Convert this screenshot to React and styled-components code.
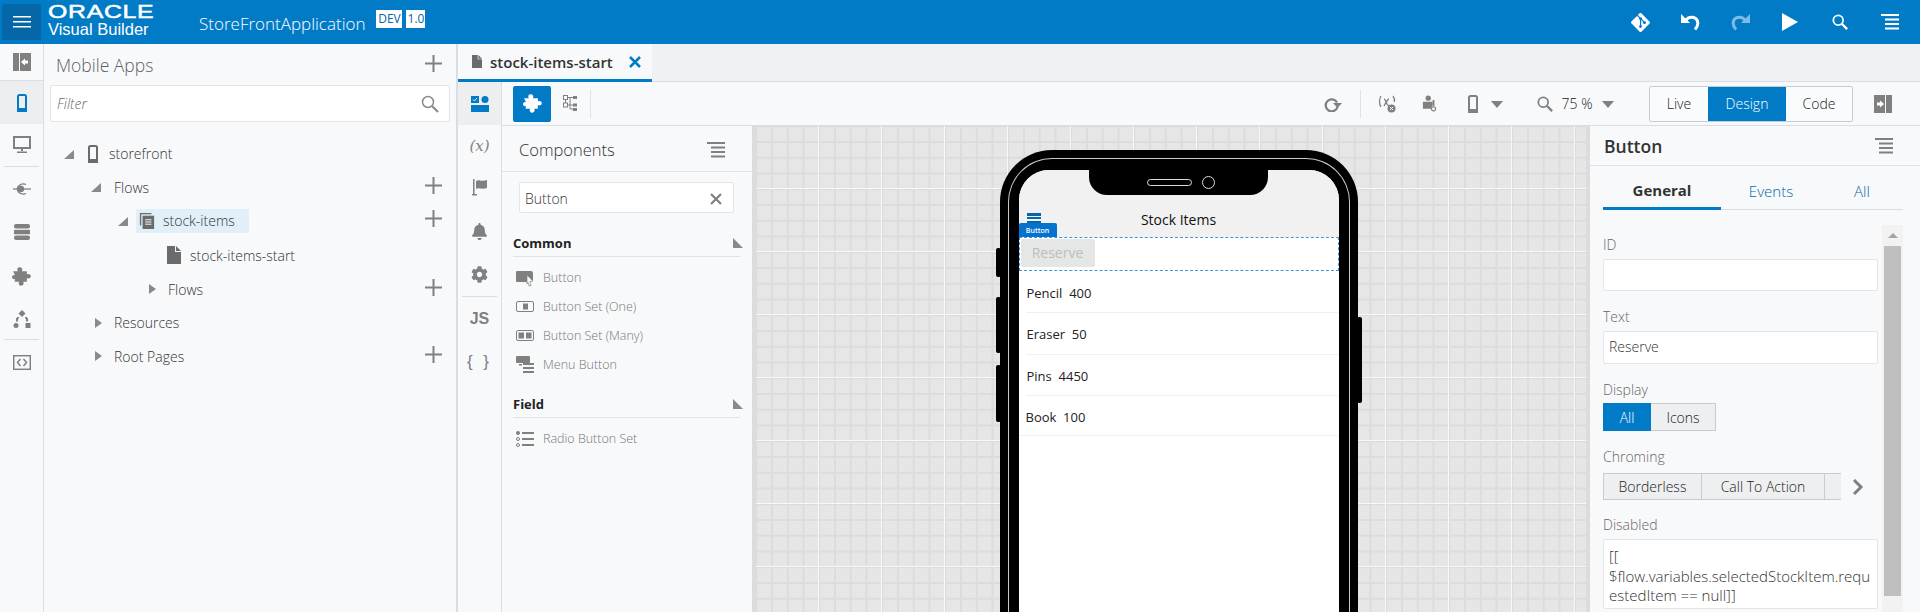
import styled, { createGlobalStyle } from "styled-components";
import { FaBell, FaCog } from "react-icons/fa";
import { SiGit } from "react-icons/si";

const GlobalStyle = createGlobalStyle`
  html, body { margin: 0; padding: 0; background: #f8f9fb; }
  * { box-sizing: border-box; }
  body { font-family: "Open Sans", "Noto Sans", sans-serif; color: #333; }
`;

const Page = styled.div`
  width: 1920px;
  height: 612px;
  display: flex;
  flex-direction: column;
  overflow: hidden;
`;

const Header = styled.header`
  height: 44px;
  flex: none;
  background: #027bc7;
  display: flex;
  align-items: center;
  color: #fff;
  padding-left: 2px;
`;

const MenuBtn = styled.div`
  width: 39px;
  height: 36px;
  border-radius: 2px;
  background: #0566a8;
  display: flex;
  align-items: center;
  justify-content: center;
`;

const Logo = styled.div`
  width: 151px;
  margin-left: 7px;
  display: flex;
  flex-direction: column;
`;

const LogoTop = styled.span`
  font-family: "Liberation Sans", sans-serif;
  font-size: 18px;
  line-height: 15px;
  font-weight: 400;
  letter-spacing: 0.5px;
  -webkit-text-stroke: 0.5px #fff;
  transform: scaleX(1.38);
  transform-origin: left center;
`;

const LogoBottom = styled.span`
  font-family: "Liberation Sans", sans-serif;
  font-size: 16.5px;
  line-height: 19px;
`;

const AppName = styled.div`
  font-size: 17px;
  font-weight: 300;
  margin-right: 11px;
  margin-top: 2px;
`;

const Badge = styled.span`
  background: #fff;
  color: #0566a8;
  font-size: 12px;
  line-height: 18px;
  height: 18px;
  margin-right: 4px;
  margin-top: -7px;
  text-align: center;
  width: ${(p) => p.$w}px;
`;

const HeaderTools = styled.div`
  margin-left: auto;
  display: flex;
  align-items: center;
  padding-right: 5px;
`;

const HeaderTool = styled.div`
  width: 50px;
  height: 44px;
  display: flex;
  align-items: center;
  justify-content: center;
  color: ${(p) => (p.$dim ? "#7cbce6" : "#fff")};
`;

const Body = styled.div`
  flex: 1;
  min-height: 0;
  display: flex;
`;

const Rail = styled.nav`
  width: 44px;
  flex: none;
  border-right: 1px solid #d6dfe6;
  background: #f8f9fb;
  display: flex;
  flex-direction: column;
`;

const RailItem = styled.div`
  height: ${(p) => p.$h || 43}px;
  flex: none;
  display: flex;
  align-items: center;
  justify-content: center;
  color: ${(p) => (p.$active ? "#027bc7" : "#808080")};
  background: ${(p) => (p.$active ? "#eceef0" : "transparent")};
  border-top: ${(p) => (p.$line ? "1px solid #d6dfe6" : "none")};
`;

const RailRule = styled.div`
  height: 1px;
  flex: none;
  margin: 0 4px;
  background: #d6dfe6;
`;

const RailGlyph = styled.span`
  font-family: ${(p) => (p.$serif ? '"DejaVu Serif", serif' : '"Liberation Sans", sans-serif')};
  font-size: ${(p) => p.$size || 16}px;
  font-weight: ${(p) => p.$weight || 400};
  font-style: ${(p) => (p.$italic ? "italic" : "normal")};
  letter-spacing: ${(p) => p.$spacing || 0}px;
`;

const Explorer = styled.section`
  width: 414px;
  flex: none;
  background: #f8f9fb;
  border-right: 2px solid #d6dfe6;
  display: flex;
  flex-direction: column;
`;

const ExplorerHead = styled.div`
  height: 41px;
  padding: 1px 14px 0 12px;
  display: flex;
  align-items: center;
  justify-content: space-between;
`;

const ExplorerTitle = styled.h2`
  margin: 0;
  font-size: 17.5px;
  font-weight: 300;
  color: #5f5f5f;
`;

const PlusMark = styled.div`
  color: #808080;
  display: flex;
  margin-left: auto;
  margin-bottom: 4px;
`;

const FilterBox = styled.div`
  height: 37px;
  margin: 0 6px;
  background: #fff;
  border: 1px solid #e3e6e9;
  border-radius: 2px;
  display: flex;
  align-items: center;
  justify-content: space-between;
  padding: 0 10px 0 6px;
  font-size: 14px;
  font-style: italic;
  font-weight: 300;
  color: #666;
`;

const FilterIcon = styled.span`
  color: #8a8a8a;
`;

const Tree = styled.div`
  margin-top: 15px;
`;

const TreeRow = styled.div`
  height: ${(p) => p.$h || 33.5}px;
  padding: 0 14px 0 ${(p) => p.$indent}px;
  display: flex;
  align-items: center;
  font-size: 14px;
  font-weight: 300;
  color: #333;
`;

const CaretBox = styled.span`
  width: 10px;
  flex: none;
  display: flex;
  color: #8a8a8a;
  margin-right: ${(p) => p.$mr}px;
`;

const TreeIcon = styled.span`
  display: flex;
  color: #6b6b6b;
  margin-right: ${(p) => p.$mr}px;
`;

const Selected = styled.div`
  display: flex;
  align-items: center;
  height: 24px;
  padding: 0 6px 0 3px;
  width: 113px;
  background: #e1eff8;
`;

const Workspace = styled.div`
  flex: 1;
  min-width: 0;
  display: flex;
  flex-direction: column;
`;

const TabBar = styled.div`
  height: 38px;
  flex: none;
  background: #f0f1f3;
  border-bottom: 1px solid #d6dfe6;
`;

const Tab = styled.div`
  width: 194px;
  height: 38px;
  background: #f8f9fb;
  border-bottom: 3px solid #027bc7;
  display: flex;
  align-items: center;
  padding-left: 14px;
  font-size: 15px;
  font-weight: 600;
  color: #333;
  gap: 8px;
`;

const TabIcon = styled.span`
  color: #6b6b6b;
`;

const TabClose = styled.span`
  color: #027bc7;
  margin-left: 8px;
`;

const WorkBody = styled.div`
  flex: 1;
  min-height: 0;
  display: flex;
`;

const SubRail = styled(Rail)``;

const Main = styled.div`
  flex: 1;
  min-width: 0;
  display: flex;
  flex-direction: column;
`;

const Toolbar = styled.div`
  height: 44px;
  flex: none;
  background: #f8f9fb;
  border-bottom: 1px solid #d6dfe6;
  display: flex;
  align-items: center;
  padding-left: 11px;
  color: #808080;
`;

const ToolButton = styled.div`
  width: ${(p) => p.$w || 38}px;
  height: 36px;
  margin-left: ${(p) => p.$ml || 0}px;
  border-radius: 2px;
  display: flex;
  align-items: center;
  justify-content: center;
  background: ${(p) => (p.$active ? "#027bc7" : "transparent")};
  color: ${(p) => (p.$active ? "#fff" : "#808080")};
  flex: none;
`;

const ToolRule = styled.div`
  width: 1px;
  height: 28px;
  background: #dfe3e7;
  flex: none;
  margin-left: ${(p) => p.$ml || 0}px;
`;

const ZoomText = styled.span`
  font-size: 14px;
  font-weight: 300;
  color: #222;
  width: 32px;
  margin-left: 8px;
  text-align: center;
  flex: none;
`;

const ViewSwitch = styled.div`
  display: flex;
  height: 36px;
  margin-left: 35px;
  border: 1px solid #c8ccd0;
  border-radius: 2px;
  background: #fafbfc;
`;

const ViewOption = styled.div`
  width: ${(p) => p.$w}px;
  display: flex;
  align-items: center;
  justify-content: center;
  font-size: 14px;
  font-weight: 300;
  color: ${(p) => (p.$active ? "#fff" : "#222")};
  background: ${(p) => (p.$active ? "#027bc7" : "transparent")};
`;

const Panels = styled.div`
  flex: 1;
  min-height: 0;
  display: flex;
`;

const Components = styled.aside`
  width: 254px;
  flex: none;
  background: #f8f9fb;
  border-right: 4px solid #dcdcdc;
`;

const PanelHead = styled.div`
  height: 46px;
  padding: 2px 27px 0 17px;
  display: flex;
  align-items: center;
  justify-content: space-between;
  border-bottom: 1px solid #dfe3e7;
`;

const PanelTitle = styled.h3`
  margin: 0;
  font-size: 16.5px;
  font-weight: 300;
  color: #333;
`;

const PanelMenu = styled.span`
  color: #808080;
`;

const SearchBox = styled.div`
  height: 31px;
  margin: 10px 18px 0 17px;
  background: #fff;
  border: 1px solid #e3e6e9;
  border-radius: 2px;
  padding: 2px 11px 0 5px;
  display: flex;
  align-items: center;
  justify-content: space-between;
  font-size: 14px;
  font-weight: 300;
  color: #333;
`;

const GroupHead = styled.div`
  height: 24px;
  margin: ${(p) => p.$mt}px 12px 0 11px;
  padding-bottom: 3px;
  display: flex;
  align-items: center;
  justify-content: space-between;
  font-size: 13px;
  font-weight: 700;
  color: #222;
  border-bottom: 1px solid #dfe3e7;
`;

const GroupCorner = styled.span`
  display: flex;
  color: #8a8a8a;
  margin-right: -3px;
`;

const PaletteItem = styled.div`
  height: 29px;
  padding-left: 14px;
  display: flex;
  align-items: center;
  gap: 9px;
  font-size: 12.5px;
  font-weight: 300;
  color: #777;
`;

const PaletteIcon = styled.span`
  width: 18px;
  display: flex;
  color: #808080;
`;

const PaletteList = styled.div`
  padding-top: 6px;
`;

const Canvas = styled.div`
  flex: 1;
  min-width: 0;
  overflow: hidden;
  display: flex;
  justify-content: center;
  align-items: flex-start;
  padding: 24px 0 0 11px;
  background-color: #e6e6e6;
  background-image:
    linear-gradient(to right, #f8f8f8 1px, transparent 1px),
    linear-gradient(to bottom, #f8f8f8 1px, transparent 1px),
    linear-gradient(to right, #dcdcdc 2px, transparent 2px),
    linear-gradient(to bottom, #dcdcdc 2px, transparent 2px);
  background-size: 63px 63px, 63px 63px, 15.75px 15.75px, 15.75px 15.75px;
  background-position: 62px 0, 0 62px, 15px 0, 0 15px;
`;

const Phone = styled.div`
  position: relative;
  width: 358px;
  height: 520px;
  flex: none;
  background: #000;
  border-radius: 52px 52px 0 0;
  padding: 8px 8px 0;
`;

const SideKey = styled.span`
  position: absolute;
  ${(p) => (p.$right ? "right: -4px;" : "left: -4px;")}
  top: ${(p) => p.$top}px;
  height: ${(p) => p.$h}px;
  width: 5px;
  background: #000;
  border-radius: 2px;
`;

const PhoneRing = styled.div`
  height: 100%;
  border: 1px solid #c9c9c9;
  border-bottom: none;
  border-radius: 44px 44px 0 0;
  background: #000;
  padding: 11px 10px 0;
`;

const Screen = styled.div`
  position: relative;
  height: 100%;
  background: #fff;
  border-radius: 30px 30px 0 0;
  overflow: hidden;
  font-family: "Open Sans", sans-serif;
`;

const Notch = styled.div`
  position: absolute;
  z-index: 2;
  top: 0;
  left: 70px;
  width: 179px;
  height: 25px;
  background: #000;
  border-radius: 0 0 18px 18px;
  display: flex;
  align-items: center;
  justify-content: center;
  gap: 10px;
  padding-left: 6px;
`;

const Speaker = styled.span`
  width: 45px;
  height: 7px;
  border: 1px solid #ddd;
  border-radius: 4px;
`;

const Camera = styled.span`
  width: 13px;
  height: 13px;
  border: 1px solid #ddd;
  border-radius: 50%;
`;

const ScreenBar = styled.div`
  position: relative;
  height: 67px;
  background: #f1f1f1;
  display: flex;
  align-items: flex-end;
  justify-content: center;
  padding-bottom: 8px;
  font-size: 14px;
  color: #111;
`;

const ScreenMenu = styled.span`
  position: absolute;
  left: 8px;
  bottom: 13px;
  width: 14px;
  height: 11px;
  border-top: 3px solid #0566a8;
  border-bottom: 3px solid #0566a8;
  &::after {
    content: "";
    display: block;
    height: 2px;
    margin-top: 1px;
    background: #0566a8;
  }
`;

const ComponentTag = styled.span`
  position: absolute;
  left: 0;
  bottom: 0;
  width: 38px;
  height: 14px;
  background: #0572ce;
  color: #fff;
  font-size: 7px;
  font-weight: 600;
  line-height: 15px;
  text-align: center;
  border-radius: 2px 2px 0 0;
`;

const SelectedRow = styled.div`
  height: 34px;
  border: 1px dashed #3c96df;
  padding: 1px 0 0 1px;
`;

const ReserveButton = styled.div`
  width: 74px;
  height: 28px;
  border-radius: 2px;
  background: #e5e6e6;
  color: #bdbdbd;
  font-size: 14px;
  line-height: 27px;
  text-align: center;
`;

const ListRow = styled.div`
  height: ${(p) => p.$h || 41.5}px;
  margin-left: ${(p) => (p.$flush ? 0 : 7)}px;
  padding-left: ${(p) => (p.$flush ? 7 : 1)}px;
  padding-top: 2px;
  display: flex;
  align-items: center;
  border-bottom: 1px solid #f0f0f0;
  font-size: 13px;
  color: #222;
  white-space: pre;
`;

const Props = styled.aside`
  width: 334px;
  flex: none;
  background: #f8f9fb;
  display: flex;
  flex-direction: column;
  border-left: 4px solid #dcdcdc;
  margin-left: -4px;
  z-index: 1;
`;

const PropsHead = styled.div`
  height: 40px;
  flex: none;
  padding: 0 27px 0 14px;
  display: flex;
  align-items: center;
  justify-content: space-between;
  border-bottom: 1px solid #dfe3e7;
  color: #808080;
`;

const PropsTitle = styled.h3`
  margin: 0;
  font-size: 17.5px;
  font-weight: 600;
  color: #333;
`;

const PropsTabs = styled.div`
  height: 44px;
  flex: none;
  margin: 0 17px 0 13px;
  display: flex;
  border-bottom: 1px solid #d6dfe6;
`;

const PropsTab = styled.div`
  width: ${(p) => p.$w}px;
  height: 44px;
  padding-top: ${(p) => (p.$active ? 6 : 5)}px;
  display: flex;
  align-items: center;
  justify-content: center;
  font-size: 15px;
  font-weight: ${(p) => (p.$active ? 700 : 300)};
  color: ${(p) => (p.$active ? "#333" : "#0566a8")};
  border-bottom: ${(p) => (p.$active ? "3px solid #027bc7" : "none")};
`;

const PropsScroll = styled.div`
  flex: 1;
  min-height: 0;
  margin: 15px 17px 0 13px;
  display: flex;
  justify-content: space-between;
`;

const Form = styled.div`
  width: 275px;
  padding-top: 10px;
`;

const Field = styled.div`
  margin-bottom: ${(p) => p.$mb || 16}px;
`;

const FieldLabel = styled.label`
  display: block;
  height: 20px;
  line-height: 20px;
  font-size: 14px;
  font-weight: 300;
  color: #666;
  margin-bottom: ${(p) => p.$mb || 4}px;
`;

const TextInput = styled.div`
  height: ${(p) => p.$h || 32}px;
  background: #fff;
  border: 1px solid #e3e6e9;
  border-radius: 2px;
  padding: 0 5px;
  font-size: 14px;
  font-weight: 300;
  line-height: 30px;
  color: #333;
`;

const TextArea = styled(TextInput)`
  line-height: 19.5px;
  padding-top: 7px;
  font-size: 15px;
  white-space: nowrap;
  overflow: hidden;
`;

const Segments = styled.div`
  display: flex;
  height: ${(p) => p.$h || 28}px;
  align-items: stretch;
`;

const Segment = styled.div`
  width: ${(p) => p.$w}px;
  flex: none;
  display: flex;
  align-items: center;
  justify-content: center;
  font-size: 14px;
  font-weight: 300;
  white-space: nowrap;
  color: ${(p) => (p.$active ? "#fff" : "#222")};
  background: ${(p) => (p.$active ? "#027bc7" : "#eeeff0")};
  border: 1px solid ${(p) => (p.$active ? "#027bc7" : "#c8ccd0")};
  border-left-width: ${(p) => (p.$first ? 1 : 0)}px;
`;

const SegmentClip = styled.div`
  width: 238px;
  display: flex;
  overflow: hidden;
  flex: none;
`;

const ChevronSlot = styled.span`
  display: flex;
  align-items: center;
  margin-left: 11px;
  color: #808080;
`;

const Scrollbar = styled.div`
  width: 21px;
  flex: none;
  background: #f2f2f2;
  padding: 0 2px;
  display: flex;
  flex-direction: column;
`;

const ScrollUp = styled.div`
  height: 21px;
  display: flex;
  align-items: center;
  justify-content: center;
  color: #a5a5a5;
`;

const ScrollThumb = styled.div`
  height: 350px;
  background: #bfbfbf;
`;

const Ico = ({ size = 18, vb = "0 0 18 18", children }) => (
  <svg width={size} height={size} viewBox={vb} fill="currentColor" style={{ display: "block" }}>
    {children}
  </svg>
);

const Plus = () => (
  <PlusMark>
    <Ico size={17} vb="0 0 17 17">
      <rect x="0" y="7.5" width="17" height="2" />
      <rect x="7.5" y="0" width="2" height="17" />
    </Ico>
  </PlusMark>
);

const Caret = ({ open, mr }) => (
  <CaretBox $mr={mr}>
    <Ico size={10} vb="0 0 10 10">
      {open ? <polygon points="10,1 10,10 0,10" /> : <polygon points="1,0 8,5 1,10" />}
    </Ico>
  </CaretBox>
);

const Corner = () => (
  <Ico size={10} vb="0 0 10 10"><polygon points="0,0 10,10 0,10" /></Ico>
);

const DownCaret = () => (
  <Ico size={12} vb="0 0 12 12"><polygon points="0,3 12,3 6,10" /></Ico>
);

const Lines = ({ size = 18 }) => (
  <Ico size={size}>
    <rect x="0" y="1" width="18" height="2" />
    <rect x="4" y="5.5" width="14" height="2" />
    <rect x="4" y="10" width="14" height="2" />
    <rect x="4" y="14.5" width="14" height="2" />
  </Ico>
);

const Search = ({ size = 18, sw = 2 }) => (
  <svg width={size} height={size} viewBox="0 0 18 18" fill="none" stroke="currentColor" strokeWidth={sw} style={{ display: "block" }}>
    <circle cx="7" cy="7" r="5.5" />
    <line x1="11" y1="11" x2="17" y2="17" strokeWidth={sw + 0.6} />
  </svg>
);

const Cross = ({ sw = 2.2 }) => (
  <svg width="12" height="12" viewBox="0 0 12 12" stroke="currentColor" strokeWidth={sw} style={{ display: "block" }}>
    <path d="M1 1l10 10M11 1L1 11" />
  </svg>
);

const Puzzle = ({ size = 19 }) => (
  <Ico size={size}>
    <path d="M1 4h4.500c-1-1.500-.6-3.400 1.500-3.800 2.400-.3 3.500 2 2.300 3.800H14l.2 3c1.500-1 3.300-.3 3.600 1.400.3 2-1.800 3-3.700 2L14 14h-3.400c.9 1.500.4 3.500-1.600 3.800-2.200.2-3.300-2-2.300-3.800H2.500l.3-2.800C1.500 12 .1 11.400 0 9.800-.1 8 1.500 7 2.900 7.700L1 4z" />
  </Ico>
);

const PhoneGlyph = ({ h = 18, w = 10 }) => (
  <svg width={w} height={h} viewBox="0 0 10 18" fill="none" stroke="currentColor" strokeWidth="2" style={{ display: "block" }}>
    <rect x="1" y="1" width="8" height="16" rx="1.500" />
    <rect x="1" y="15" width="8" height="2" fill="currentColor" />
  </svg>
);

const DocGlyph = ({ w = 14, h = 18 }) => (
  <svg width={w} height={h} viewBox="0 0 14 18" fill="currentColor" style={{ display: "block" }}>
    <path d="M0 0h8v6h6v12H0z" />
    <path d="M9 0l5 5H9z" />
  </svg>
);

const Undo = ({ flip }) => (
  <svg width="19" height="18" viewBox="0 0 19 18" fill="none" style={{ display: "block", transform: flip ? "scaleX(-1)" : "none" }}>
    <path d="M5 7c3-4 9-3.500 11 0 1.700 3.300.7 6.500-2 9.500" stroke="currentColor" strokeWidth="3" />
    <polygon points="0,1 9,10 0,10" fill="currentColor" />
  </svg>
);

const App = () => {
  return (
    <>
      <GlobalStyle />
      <Page>
        <Header>
          <MenuBtn>
            <svg width="18" height="12" viewBox="0 0 18 12" fill="#fff" style={{ display: "block" }}>
              <rect y="0" width="18" height="1.500" />
              <rect y="5" width="18" height="1.500" />
              <rect y="10" width="18" height="1.500" />
            </svg>
          </MenuBtn>
          <Logo>
            <LogoTop>ORACLE</LogoTop>
            <LogoBottom>Visual Builder</LogoBottom>
          </Logo>
          <AppName>StoreFrontApplication</AppName>
          <Badge $w={26}>DEV</Badge>
          <Badge $w={19}>1.0</Badge>
          <HeaderTools>
            <HeaderTool><SiGit size={19} /></HeaderTool>
            <HeaderTool><Undo /></HeaderTool>
            <HeaderTool $dim><Undo flip /></HeaderTool>
            <HeaderTool>
              <Ico size={18}><polygon points="1,0 17,9 1,18" /></Ico>
            </HeaderTool>
            <HeaderTool><Search size={16} /></HeaderTool>
            <HeaderTool><Lines /></HeaderTool>
          </HeaderTools>
        </Header>
        <Body>
          <Rail>
            <RailItem $h={36}>
              <Ico size={18}>
                <path d="M0 0h6v18H0zM7 0h11v18H7z" />
                <polygon points="8,9 12,5.500 12,7.500 15,7.500 15,10.500 12,10.500 12,12.500" fill="#fff" />
              </Ico>
            </RailItem>
            <RailItem $h={44} $active $line>
              <PhoneGlyph />
            </RailItem>
            <RailItem $h={42}>
              <svg width="18" height="18" viewBox="0 0 18 18" fill="none" stroke="currentColor" strokeWidth="2" style={{ display: "block" }}>
                <rect x="1" y="1" width="16" height="11" />
                <rect x="8" y="13" width="2" height="2" fill="currentColor" stroke="none" />
                <rect x="4" y="15.500" width="10" height="1.500" fill="currentColor" stroke="none" />
              </svg>
            </RailItem>
            <RailRule />
            <RailItem $h={43}>
              <svg width="18" height="14" viewBox="0 0 18 14" fill="none" stroke="currentColor" strokeWidth="1.300" style={{ display: "block" }}>
                <path d="M13 2.500a6 5 0 1 0 0 9" />
                <circle cx="8" cy="7" r="2.500" fill="currentColor" />
                <line x1="0" y1="7" x2="18" y2="7" />
              </svg>
            </RailItem>
            <RailItem $h={44}>
              <Ico size={18}>
                <rect x="1" y="1" width="16" height="4.500" rx="2" />
                <rect x="1" y="6.800" width="16" height="4.500" />
                <rect x="1" y="12.600" width="16" height="4.500" rx="2" />
              </Ico>
            </RailItem>
            <RailItem $h={44}><Puzzle /></RailItem>
            <RailItem $h={41}>
              <Ico size={18}>
                <polygon points="9,0 12.500,3.500 9,7 5.500,3.500" />
                <rect x="0.500" y="13" width="5" height="5" rx="2.500" />
                <rect x="12.500" y="13" width="5" height="5" />
                <rect x="3" y="8" width="2" height="3.500" />
                <rect x="13" y="8" width="2" height="3.500" />
                <rect x="4" y="7" width="2" height="1.500" />
                <rect x="12" y="7" width="2" height="1.500" />
              </Ico>
            </RailItem>
            <RailRule />
            <RailItem $h={44}>
              <svg width="18" height="15" viewBox="0 0 18 15" fill="none" stroke="currentColor" strokeWidth="1.500" style={{ display: "block" }}>
                <rect x="0.700" y="0.700" width="16.600" height="13.600" />
                <path d="M7.500 4l-3 3.500 3 3.500M10.500 4l3 3.500-3 3.500" />
              </svg>
            </RailItem>
          </Rail>
          <Explorer>
            <ExplorerHead>
              <ExplorerTitle>Mobile Apps</ExplorerTitle>
              <Plus />
            </ExplorerHead>
            <FilterBox>
              Filter
              <FilterIcon><Search size={18} sw={1.500} /></FilterIcon>
            </FilterBox>
            <Tree>
              <TreeRow $indent={20}>
                <Caret open mr={14} />
                <TreeIcon $mr={11}><PhoneGlyph /></TreeIcon>
                storefront
              </TreeRow>
              <TreeRow $indent={47}>
                <Caret open mr={13} />
                Flows
                <Plus />
              </TreeRow>
              <TreeRow $indent={74}>
                <Caret open mr={8} />
                <Selected>
                  <TreeIcon $mr={8}>
                    <Ico size={16} vb="0 0 16 18">
                      <path d="M0 0h13v1.500H1.500V14H0z" />
                      <path d="M3 3h13v15H3z" />
                      <rect x="6" y="7" width="7" height="1.200" fill="#e1eff8" />
                      <rect x="6" y="9.500" width="7" height="1.200" fill="#e1eff8" />
                      <rect x="6" y="12" width="7" height="1.200" fill="#e1eff8" />
                    </Ico>
                  </TreeIcon>
                  stock-items
                </Selected>
                <Plus />
              </TreeRow>
              <TreeRow $indent={123} $h={35}>
                <TreeIcon $mr={9}><DocGlyph /></TreeIcon>
                stock-items-start
              </TreeRow>
              <TreeRow $indent={104}>
                <Caret mr={10} />
                Flows
                <Plus />
              </TreeRow>
              <TreeRow $indent={50}>
                <Caret mr={10} />
                Resources
              </TreeRow>
              <TreeRow $indent={50}>
                <Caret mr={10} />
                Root Pages
                <Plus />
              </TreeRow>
            </Tree>
          </Explorer>
          <Workspace>
            <TabBar>
              <Tab>
                <TabIcon><DocGlyph w={10} h={13} /></TabIcon>
                stock-items-start
                <TabClose><Cross sw={2.500} /></TabClose>
              </Tab>
            </TabBar>
            <WorkBody>
              <SubRail>
                <RailItem $h={43} $active>
                  <Ico size={18}>
                    <rect x="0" y="1" width="8" height="7" />
                    <circle cx="14" cy="4.500" r="3.500" />
                    <rect x="0" y="10" width="18" height="7" />
                    <path d="M2 4.500l1.500 1.500L6 3" stroke="#eceef0" strokeWidth="1" fill="none" />
                  </Ico>
                </RailItem>
                <RailItem $h={42}><RailGlyph $serif $italic $size={15}>(x)</RailGlyph></RailItem>
                <RailItem $h={42}>
                  <Ico size={18}>
                    <rect x="2" y="0" width="1.500" height="15" />
                    <rect x="1" y="15" width="5" height="1.500" />
                    <path d="M5 2c3-2 5 1 11-1v8c-5 2-8-1-11 1z" />
                  </Ico>
                </RailItem>
                <RailItem $h={44}><FaBell size={17} /></RailItem>
                <RailItem $h={43}><FaCog size={17} /></RailItem>
                <RailRule />
                <RailItem $h={44}><RailGlyph $size={16} $weight={700}>JS</RailGlyph></RailItem>
                <RailItem $h={42}><RailGlyph $size={17} $spacing={3}>{"{ }"}</RailGlyph></RailItem>
              </SubRail>
              <Main>
                <Toolbar>
                  <ToolButton $active><Puzzle /></ToolButton>
                  <ToolButton>
                    <svg width="14" height="18" viewBox="0 0 14 18" fill="none" stroke="currentColor" style={{ display: "block" }}>
                      <rect x="0.500" y="0.500" width="4" height="4" />
                      <rect x="0.500" y="8" width="4" height="4" />
                      <path d="M4.500 2.500H10M2.500 4.500V8M4.500 10H10M7 3v11h3" />
                      <rect x="10" y="1" width="4" height="3" fill="currentColor" stroke="none" />
                      <rect x="10" y="8.500" width="4" height="3" fill="currentColor" stroke="none" />
                      <rect x="10" y="13" width="4" height="3" fill="currentColor" stroke="none" />
                    </svg>
                  </ToolButton>
                  <ToolRule $ml={1} />
                  <ToolButton $w={18} $ml={733}>
                    <svg width="18" height="16" viewBox="0 0 18 16" fill="none" style={{ display: "block" }}>
                      <path d="M13 6.500A6 6 0 1 0 13.500 11" stroke="currentColor" strokeWidth="2.300" />
                      <polygon points="9,7 18,7 13.500,12" fill="currentColor" />
                    </svg>
                  </ToolButton>
                  <ToolRule $ml={18} />
                  <ToolButton $w={18} $ml={17}>
                    <svg width="18" height="18" viewBox="0 0 18 18" fill="none" stroke="currentColor" strokeWidth="1.300" style={{ display: "block" }}>
                      <path d="M3 1C1 4 1 9 3 12M15 1c1.500 2 1.700 4 1.400 6M6 4c1.500 0 2 3 3 5s1.500 2 2.500 2M11 4c-1.500 0-3 3-5 7" />
                      <circle cx="13.500" cy="13.500" r="4" fill="currentColor" stroke="none" />
                      <path d="M12 12l3 3M15 12l-3 3" stroke="#f8f9fb" strokeWidth="1" />
                    </svg>
                  </ToolButton>
                  <ToolButton $w={16} $ml={26}>
                    <Ico size={17}>
                      <circle cx="7" cy="3" r="3" />
                      <path d="M1 7h11v4l-1 1v3H1z" />
                      <rect x="12" y="5" width="2" height="7" />
                      <circle cx="13" cy="15" r="2.300" fill="none" stroke="currentColor" strokeWidth="1.200" />
                    </Ico>
                  </ToolButton>
                  <ToolButton $w={12} $ml={29}><PhoneGlyph /></ToolButton>
                  <ToolButton $w={12} $ml={12}><DownCaret /></ToolButton>
                  <ToolButton $w={16} $ml={34}><Search size={16} /></ToolButton>
                  <ZoomText>75 %</ZoomText>
                  <ToolButton $w={12} $ml={9}><DownCaret /></ToolButton>
                  <ViewSwitch>
                    <ViewOption $w={58}>Live</ViewOption>
                    <ViewOption $w={78} $active>Design</ViewOption>
                    <ViewOption $w={66}>Code</ViewOption>
                  </ViewSwitch>
                  <ToolButton $w={18} $ml={21}>
                    <Ico size={18}>
                      <path d="M0 0h11v18H0zM12 0h6v18h-6z" />
                      <polygon points="10,9 6,5.500 6,7.500 3,7.500 3,10.500 6,10.500 6,12.500" fill="#fff" />
                    </Ico>
                  </ToolButton>
                </Toolbar>
                <Panels>
                  <Components>
                    <PanelHead>
                      <PanelTitle>Components</PanelTitle>
                      <PanelMenu><Lines /></PanelMenu>
                    </PanelHead>
                    <SearchBox>
                      Button
                      <PanelMenu><Cross /></PanelMenu>
                    </SearchBox>
                    <GroupHead $mt={20}>
                      Common
                      <GroupCorner><Corner /></GroupCorner>
                    </GroupHead>
                    <PaletteList>
                      <PaletteItem>
                        <PaletteIcon>
                          <Ico size={18} vb="0 0 18 16">
                            <path d="M1 1h14a2 2 0 0 1 2 2v7h-6v2H1a1 1 0 0 1-1-1V2a1 1 0 0 1 1-1z" />
                            <path d="M11 5l6 6-3 .5 1 4-2 .5-1-3.500-1 1.500z" fill="#f8f9fb" stroke="currentColor" strokeWidth=".7" />
                          </Ico>
                        </PaletteIcon>
                        Button
                      </PaletteItem>
                      <PaletteItem>
                        <PaletteIcon>
                          <svg width="18" height="12" viewBox="0 0 18 12" fill="none" stroke="currentColor" style={{ display: "block" }}>
                            <rect x="0.500" y="0.500" width="17" height="10" rx="1.500" />
                            <rect x="7" y="2.500" width="5" height="6" fill="currentColor" stroke="none" />
                          </svg>
                        </PaletteIcon>
                        Button Set (One)
                      </PaletteItem>
                      <PaletteItem>
                        <PaletteIcon>
                          <svg width="18" height="12" viewBox="0 0 18 12" fill="none" stroke="currentColor" style={{ display: "block" }}>
                            <rect x="0.500" y="0.500" width="17" height="10" rx="1.500" />
                            <rect x="2.500" y="2.500" width="5.500" height="6" fill="currentColor" stroke="none" />
                            <rect x="10" y="2.500" width="5.500" height="6" fill="currentColor" stroke="none" />
                          </svg>
                        </PaletteIcon>
                        Button Set (Many)
                      </PaletteItem>
                      <PaletteItem>
                        <PaletteIcon>
                          <Ico size={18}>
                            <rect x="0" y="0" width="14" height="7" rx="1" />
                            <rect x="3" y="8" width="3" height="1.500" />
                            <rect x="7" y="7" width="11" height="2" />
                            <rect x="7" y="11" width="11" height="2" />
                            <rect x="7" y="15" width="11" height="2" />
                          </Ico>
                        </PaletteIcon>
                        Menu Button
                      </PaletteItem>
                    </PaletteList>
                    <GroupHead $mt={15}>
                      Field
                      <GroupCorner><Corner /></GroupCorner>
                    </GroupHead>
                    <PaletteList>
                      <PaletteItem>
                        <PaletteIcon>
                          <Ico size={18} vb="0 0 18 16">
                            <circle cx="2" cy="2" r="2" />
                            <rect x="6" y="1" width="12" height="2" />
                            <circle cx="2" cy="8" r="1.500" fill="none" stroke="currentColor" />
                            <rect x="6" y="7" width="12" height="2" />
                            <circle cx="2" cy="14" r="1.500" fill="none" stroke="currentColor" />
                            <rect x="6" y="13" width="12" height="2" />
                          </Ico>
                        </PaletteIcon>
                        Radio Button Set
                      </PaletteItem>
                    </PaletteList>
                  </Components>
                  <Canvas>
                    <Phone>
                      <SideKey $top={98} $h={29} />
                      <SideKey $top={147} $h={56} />
                      <SideKey $top={215} $h={57} />
                      <SideKey $right $top={167} $h={86} />
                      <PhoneRing>
                        <Screen>
                          <Notch>
                            <Speaker />
                            <Camera />
                          </Notch>
                          <ScreenBar>
                            <ScreenMenu />
                            <ComponentTag>Button</ComponentTag>
                            Stock Items
                          </ScreenBar>
                          <SelectedRow>
                            <ReserveButton>Reserve</ReserveButton>
                          </SelectedRow>
                          <ListRow $h={42}>Pencil  400</ListRow>
                          <ListRow>Eraser  50</ListRow>
                          <ListRow>Pins  4450</ListRow>
                          <ListRow $flush $h={40}>Book  100</ListRow>
                        </Screen>
                      </PhoneRing>
                    </Phone>
                  </Canvas>
                  <Props>
                    <PropsHead>
                      <PropsTitle>Button</PropsTitle>
                      <Lines />
                    </PropsHead>
                    <PropsTabs>
                      <PropsTab $w={118} $active>General</PropsTab>
                      <PropsTab $w={100}>Events</PropsTab>
                      <PropsTab $w={82}>All</PropsTab>
                    </PropsTabs>
                    <PropsScroll>
                      <Form>
                        <Field>
                          <FieldLabel>ID</FieldLabel>
                          <TextInput />
                        </Field>
                        <Field>
                          <FieldLabel>Text</FieldLabel>
                          <TextInput $h={33}>Reserve</TextInput>
                        </Field>
                        <Field>
                          <FieldLabel $mb={3}>Display</FieldLabel>
                          <Segments>
                            <Segment $w={48} $first $active>All</Segment>
                            <Segment $w={65}>Icons</Segment>
                          </Segments>
                        </Field>
                        <Field $mb={15}>
                          <FieldLabel $mb={6}>Chroming</FieldLabel>
                          <Segments $h={27}>
                            <SegmentClip>
                              <Segment $w={99} $first>Borderless</Segment>
                              <Segment $w={123}>Call To Action</Segment>
                              <Segment $w={40} />
                            </SegmentClip>
                            <ChevronSlot>
                              <svg width="12" height="16" viewBox="0 0 12 16" fill="none" stroke="currentColor" strokeWidth="3" style={{ display: "block" }}>
                                <path d="M2 1l7 7-7 7" />
                              </svg>
                            </ChevronSlot>
                          </Segments>
                        </Field>
                        <Field>
                          <FieldLabel>Disabled</FieldLabel>
                          <TextArea $h={70}>
                            [[<br />
                            $flow.variables.selectedStockItem.requ<br />
                            estedItem == null]]
                          </TextArea>
                        </Field>
                      </Form>
                      <Scrollbar>
                        <ScrollUp>
                          <Ico size={10} vb="0 0 10 10"><polygon points="0,7 10,7 5,2" /></Ico>
                        </ScrollUp>
                        <ScrollThumb />
                      </Scrollbar>
                    </PropsScroll>
                  </Props>
                </Panels>
              </Main>
            </WorkBody>
          </Workspace>
        </Body>
      </Page>
    </>
  );
};

export default App;
